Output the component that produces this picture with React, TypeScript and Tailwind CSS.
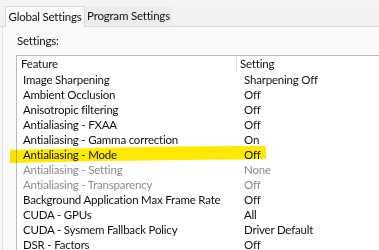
const rows: { feature: string; setting: string; muted?: boolean }[] = [
  { feature: "Image Sharpening", setting: "Sharpening Off" },
  { feature: "Ambient Occlusion", setting: "Off" },
  { feature: "Anisotropic filtering", setting: "Off" },
  { feature: "Antialiasing - FXAA", setting: "Off" },
  { feature: "Antialiasing - Gamma correction", setting: "On" },
  { feature: "Antialiasing - Mode", setting: "Off" },
  { feature: "Antialiasing - Setting", setting: "None", muted: true },
  { feature: "Antialiasing - Transparency", setting: "Off", muted: true },
  { feature: "Background Application Max Frame Rate", setting: "Off" },
  { feature: "CUDA - GPUs", setting: "All" },
  { feature: "CUDA - Sysmem Fallback Policy", setting: "Driver Default" },
  { feature: "DSR - Factors", setting: "Off" },
];

export default function App() {
  return (
    <div className="relative h-[250px] w-[379px] overflow-hidden whitespace-nowrap bg-[#f9f9f9] font-['Lato',sans-serif] text-[11.5px] tracking-[-0.2px] text-[#111]">
      {/* tab strip */}
      <div className="flex h-[27px] items-end border-b border-[#dadada] bg-gradient-to-b from-[#f4f4f4] to-[#f1f1f1] pl-[5px]">
        <div className="-mb-px flex h-[21px] w-[80px] items-center justify-center border-x border-t border-[#dadada] bg-[#f9f9f9] pb-px">
          Global Settings
        </div>
        <div className="mb-px flex h-[18px] w-[87px] items-center justify-center bg-[#ececec]">
          Program Settings
        </div>
      </div>

      <div className="ml-[2px] h-full border-l border-[#e4e4e4] pl-[13px]">
        <div className="flex h-[28px] items-center pl-px">Settings:</div>

        {/* list box */}
        <div className="w-[400px] border border-[#b9b9b9] bg-white">
          <div className="flex h-[16px] items-center leading-[16px]">
            <div className="h-full w-[220px] border-r border-[#e3e3e3] pl-[4px]">Feature</div>
            <div className="pl-[3px]">Setting</div>
          </div>
          {rows.map((r) => (
            <div
              key={r.feature}
              className={`flex h-[15px] leading-[15px] ${r.muted ? "text-[#8a8a8a]" : ""}`}
            >
              <div className="w-[221px] pl-[6px]">{r.feature}</div>
              <div className="pl-[6px]">{r.setting}</div>
            </div>
          ))}
        </div>
      </div>

      {/* marker highlight */}
      <svg className="pointer-events-none absolute left-0 top-0 mix-blend-multiply" width="379" height="250">
        <path
          d="M10 150 C 80 148, 180 146, 266 146 L 266 159 C 180 160, 80 161, 10 163 Z"
          fill="#ffe900"
        />
      </svg>
    </div>
  );
}
